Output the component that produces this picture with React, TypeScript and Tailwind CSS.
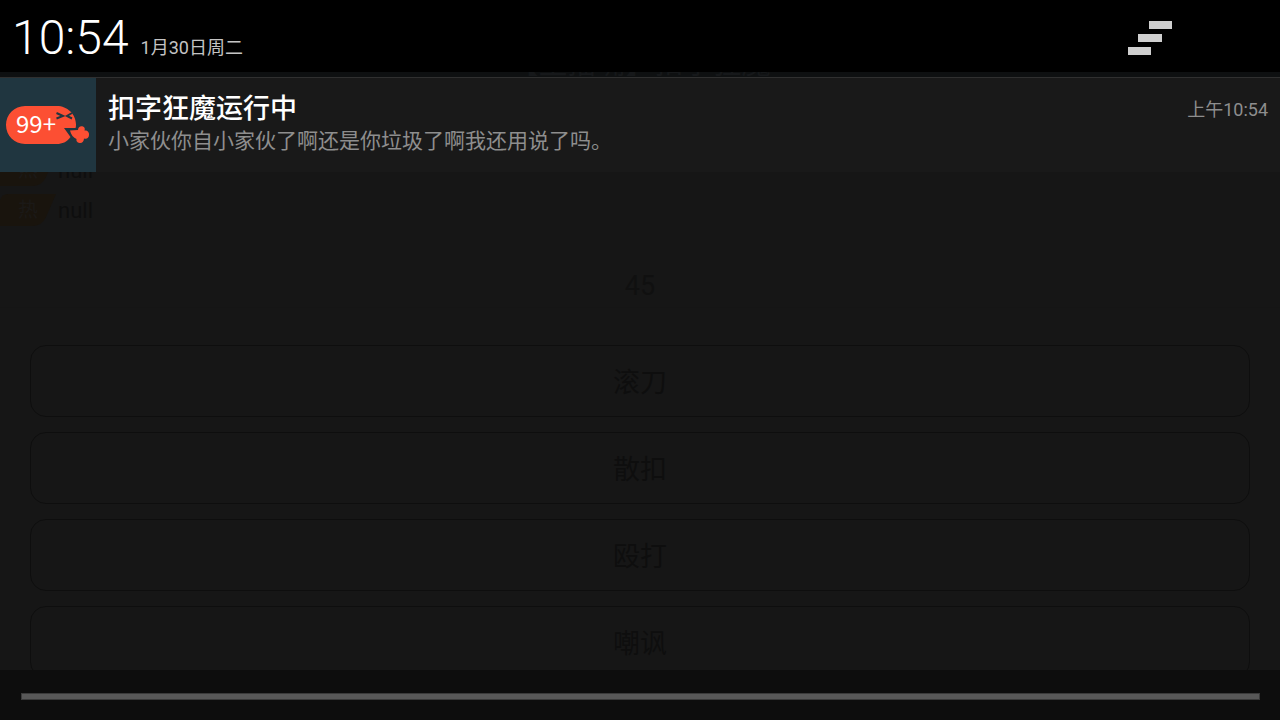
import React from 'react';

const MESSAGES = [
    { tag: '热', text: 'null' },
    { tag: '热', text: 'null' },
];

const ACTIONS = ['滚刀', '散扣', '殴打', '嘲讽'];

/* Speech pill biting a small splash, used as the app icon */
const AppIcon: React.FC = () => (
    <div className="w-24 h-[94px] shrink-0 bg-[#203640]">
        <svg viewBox="0 1 96 94" className="w-full h-full" aria-label="99+">
            <path
                d="M25 29H57C67 29 76 37 76 47.500Q76 50 75.500 51H64L70.500 60C67 65 62 67 57 67H25C14.500 67 6 58.500 6 48S14.500 29 25 29Z"
                fill="#fc4f33"
            />
            <path
                d="M70 53.500L78 53C78 50 80.500 48.500 83 49.500C85 50.500 85 52 84.500 53.500C87 53 89.500 55 89 58C89 61 86.500 62.500 84 61.500C84 64.500 82 66.500 79.500 66C77 65.500 76 64 76.500 62C73.500 60.500 71 58 70 53.500Z"
                fill="#fc4f33"
            />
            <path
                d="M56.500 36L63 39L56.500 41.500M72 36L67 39L72 41.500"
                fill="none"
                stroke="#203640"
                strokeWidth="2"
            />
            <text x="16" y="56" fontSize="24" fill="#fff" fontFamily="'Noto Sans CJK SC', sans-serif">
                99+
            </text>
        </svg>
    </div>
);

/* Chat screen that shows dimly behind the shade */
const ChatScreen: React.FC = () => (
    <div className="h-full flex flex-col bg-[#161616] text-[#0e0e0e]">
        <header className="h-[110px] shrink-0 pt-12 bg-[#0e1011] text-center">
            <h1 className="text-[29px] leading-8 text-[#16181a]">【主播嘴】扣字狂魔</h1>
        </header>
        <ul className="pt-10">
            {MESSAGES.map((m, i) => (
                <li key={i} className="h-10 flex items-center gap-[2px] text-[22px]">
                    <span className="relative w-14 h-8 flex items-center justify-center text-[20px] text-[#1b1917]">
                        <svg viewBox="0 0 56 32" className="absolute inset-0 w-full h-full">
                            <path d="M0 6Q2 0 8 0H56L46 23Q42 32 32 32H0Z" fill="#19140d" />
                        </svg>
                        <span className="relative">{m.tag}</span>
                    </span>
                    <span>{m.text}</span>
                </li>
            ))}
        </ul>
        <div className="h-[78px] shrink-0 pt-9 border-b border-[#151515] text-center text-[27px] leading-10 text-[#101010]">
            45
        </div>
        <div className="flex flex-col gap-[15px] pt-[37px] px-[30px]">
            {ACTIONS.map((label) => (
                <button
                    key={label}
                    type="button"
                    className="h-[72px] shrink-0 pt-1 rounded-2xl border border-[#0e0e0e] text-[27px]"
                >
                    {label}
                </button>
            ))}
        </div>
    </div>
);

const NotificationShade: React.FC = () => (
    <section className="absolute inset-0 flex flex-col">
        <header className="h-[72px] pt-1 pl-3 pr-4 flex items-center justify-between bg-black">
            <div className="flex items-baseline gap-3 text-white">
                <time className="font-['Roboto'] font-light text-[48px] leading-[68px]">10:54</time>
                <span className="text-[18px] text-[#c4c4c4]">1月30日周二</span>
            </div>
            <button type="button" aria-label="Clear all" className="w-11 h-[34px] mr-[92px]">
                <svg viewBox="0 0 44 34" className="w-full h-full" fill="#cfcfcf">
                    <rect x="21" y="0" width="23" height="8" />
                    <rect x="10" y="13" width="24" height="8" />
                    <rect x="0" y="26" width="23" height="8" />
                </svg>
            </button>
        </header>
        <article className="mt-[5px] flex bg-[#191919] border-t border-[#303030]">
            <AppIcon />
            <div className="flex-1 px-3 pt-[13px]">
                <div className="flex items-center justify-between">
                    <h2 className="text-[27px] leading-9 font-medium text-white">扣字狂魔运行中</h2>
                    <time className="text-[18px] text-[#8e8e8e]">上午10:54</time>
                </div>
                <p className="text-[21px] leading-7 text-[#8e8e8e]">小家伙你自小家伙了啊还是你垃圾了啊我还用说了吗。</p>
            </div>
        </article>
        <footer className="mt-auto h-[50px] pl-[21px] pr-5 pt-[23px] bg-[#0d0d0d]">
            <div className="h-[7px] border border-[#3b3b3b] bg-[#585858]" />
        </footer>
    </section>
);

const App: React.FC = () => (
    <main className="relative h-screen overflow-hidden font-['Roboto','Noto_Sans_CJK_SC',sans-serif]">
        <ChatScreen />
        <NotificationShade />
    </main>
);

export default App;
